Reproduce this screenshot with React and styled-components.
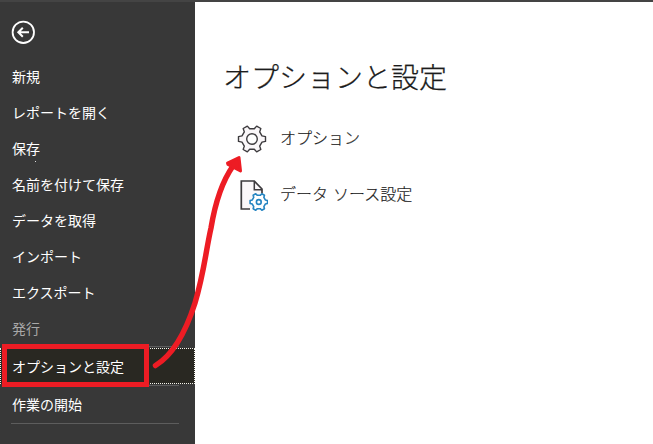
import React from "react";
import styled, { createGlobalStyle } from "styled-components";

const Global = createGlobalStyle`
  * { box-sizing: border-box; }
  body { margin: 0; background: #fff; overflow: hidden; }
`;

const Page = styled.div`
  position: relative;
  display: flex;
  flex-direction: column;
  width: 653px;
  height: 444px;
  font-family: "Noto Sans CJK JP", sans-serif;
`;

const TopEdge = styled.div`
  flex: none;
  height: 2px;
  background: #444;
`;

const Body = styled.div`
  display: flex;
  flex: 1;
`;

const Sidebar = styled.nav`
  display: flex;
  flex-direction: column;
  width: 195px;
  padding-top: 18px;
  background: #383838;
`;

const BackButton = styled.button`
  display: flex;
  width: 24px;
  height: 24px;
  margin: 0 0 14px 11px;
  padding: 0;
  border: 0;
  background: none;
`;

const NavItem = styled.a`
  display: flex;
  flex: none;
  align-items: center;
  height: 36px;
  padding: 0 0 1px 12px;
  color: ${(p) => (p.$disabled ? "#a9a9a9" : "#fff")};
  background: ${(p) => (p.$active ? "#292822" : "transparent")};
  outline: ${(p) => (p.$active ? "1px dotted #f4f4ee" : "none")};
  outline-offset: -1px;
  font-size: 14px;
  line-height: 20px;
  white-space: nowrap;
`;

const Divider = styled.hr`
  flex: none;
  width: 168px;
  height: 1px;
  margin: ${(p) => p.$margin || "0"} 0 0 11px;
  border: 0;
  background: #5d5d5d;
`;

const Spacer = styled.div`
  flex: none;
  height: 1px;
`;

const Content = styled.main`
  display: flex;
  flex-direction: column;
  flex: 1;
  padding: 54px 0 0 28px;
  color: #1c1c1c;
`;

const Title = styled.h1`
  margin: 0 0 15px;
  font-size: 28px;
  font-weight: 300;
  line-height: 40px;
  white-space: nowrap;
  -webkit-text-stroke: 0.25px #1c1c1c;
`;

const Option = styled.a`
  display: flex;
  align-items: center;
  gap: 12px;
  height: 56px;
  padding-left: 13px;
  font-size: 16px;
  font-weight: 300;
  line-height: 24px;
  white-space: nowrap;
  word-spacing: 1.5px;
  -webkit-text-stroke: 0.2px #1c1c1c;
`;

const OptionLabel = styled.span`
  padding-bottom: 4px;
`;

const Icon = styled.svg`
  flex: none;
  display: block;
`;

const Annotation = styled.svg`
  position: absolute;
  inset: 0;
  pointer-events: none;
`;

const gearPath = (cx, cy, tip, valley, halfTip, halfBase) => {
  const points = [];
  for (let i = 0; i < 6; i += 1) {
    const a = (i * Math.PI) / 3;
    const at = (r, w) =>
      `${(cx + r * Math.cos(a) - w * Math.sin(a)).toFixed(2)} ${(cy + r * Math.sin(a) + w * Math.cos(a)).toFixed(2)}`;
    points.push(at(valley, -halfBase), at(tip, -halfTip), at(tip, halfTip), at(valley, halfBase));
  }
  return `M${points.join("L")}Z`;
};

const navItems = [
  "新規",
  "レポートを開く",
  "保存",
  "名前を付けて保存",
  "データを取得",
  "インポート",
  "エクスポート",
];

export default function App() {
  return (
    <Page>
      <Global />
      <TopEdge />
      <Body>
        <Sidebar>
          <BackButton aria-label="戻る">
            <Icon width="24" height="24" viewBox="0 0 24 24" fill="none" stroke="#fff">
              <circle cx="12.3" cy="12.3" r="10.7" strokeWidth="1.8" />
              <path d="M18 12.3H7.3M11.8 7.8L7.3 12.3l4.5 4.5" strokeWidth="2" />
            </Icon>
          </BackButton>
          {navItems.map((label) => (
            <NavItem key={label}>{label}</NavItem>
          ))}
          <NavItem $disabled>発行</NavItem>
          <Divider />
          <Spacer />
          <NavItem $active>オプションと設定</NavItem>
          <Divider $margin="1px" />
          <NavItem>作業の開始</NavItem>
          <Divider $margin="1px" />
        </Sidebar>
        <Content>
          <Title>オプションと設定</Title>
          <Option>
            <Icon width="32" height="32" viewBox="0 0 32 32" fill="#faf7f9" stroke="#3d3b3e" strokeWidth="1.4" strokeLinejoin="round">
              <path d={gearPath(16, 16, 13.5, 10, 2.4, 3.1)} />
              <circle cx="16" cy="16" r="5.3" fill="#fff" />
            </Icon>
            <OptionLabel>オプション</OptionLabel>
          </Option>
          <Option>
            <Icon width="32" height="32" viewBox="0 0 32 32" fill="none">
              <path d="M14 30H5.300V2H18.300L26 10V14.500" fill="#faf7f9" stroke="#3d3b3e" strokeWidth="1.7" />
              <path d="M18.300 2v8.700h7.700" stroke="#3d3b3e" strokeWidth="1.5" />
              <path d={gearPath(22.8, 23, 8.7, 6.5, 1.5, 2.1)} fill="#fff" stroke="#2484c1" strokeWidth="1.6" strokeLinejoin="round" />
              <circle cx="22.8" cy="23" r="2.4" stroke="#2484c1" strokeWidth="1.6" />
            </Icon>
            <OptionLabel>データ ソース設定</OptionLabel>
          </Option>
        </Content>
      </Body>
      <Annotation width="653" height="444" viewBox="0 0 653 444" fill="none">
        <rect x="4.5" y="346.5" width="142" height="38" stroke="#ed1c24" strokeWidth="5" />
        <path d="M155.500 365.500C173 355 186 331 195 303C204 273 206 250 211 228C215 204 221 183 233 166" stroke="#ed1c24" strokeWidth="5.5" strokeLinecap="round" />
        <path d="M227.500 163L239 157.500L240.500 171L228 164.500Z" fill="#ed1c24" stroke="#ed1c24" strokeWidth="3" strokeLinejoin="round" />
        <rect x="35" y="161" width="1" height="1" fill="#ddd" />
      </Annotation>
    </Page>
  );
}
